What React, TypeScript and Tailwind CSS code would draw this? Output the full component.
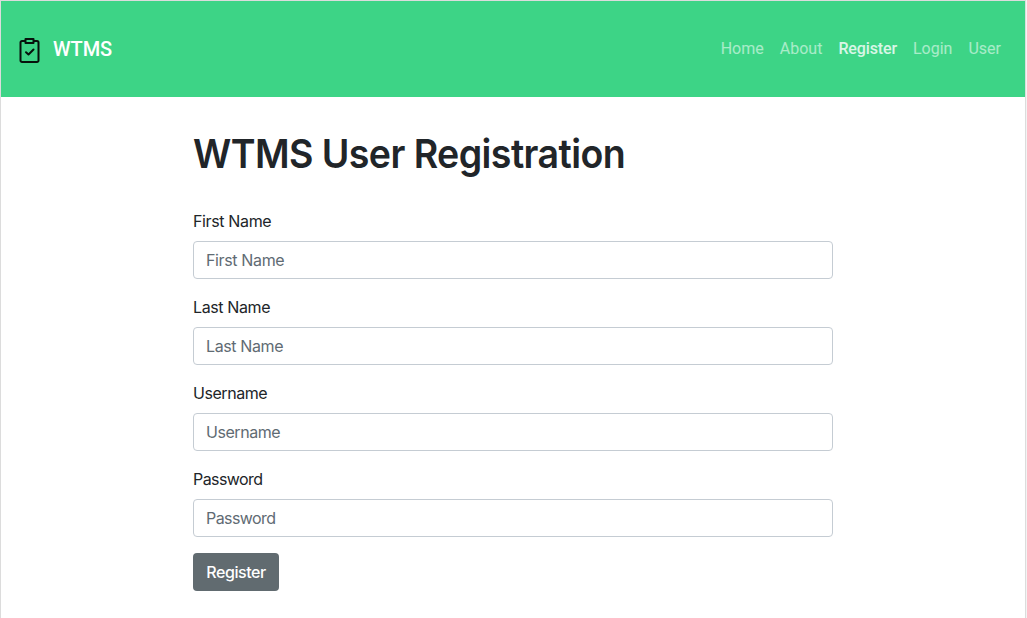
import React from "react";

const fields = [
  { label: "First Name", tracking: "tracking-[-0.36px]" },
  { label: "Last Name", tracking: "tracking-[-0.38px]" },
  { label: "Username", tracking: "tracking-[-0.45px]" },
  { label: "Password", tracking: "tracking-[-0.58px]" },
];

function ClipboardIcon() {
  return (
    <svg className="mt-1" width="24" height="28" viewBox="0 0 24 28" fill="none" stroke="#07120c" strokeWidth="2" strokeLinejoin="round" strokeLinecap="round">
      <path d="M8 4H5A1.500 1.500 0 0 0 3.500 5.500V23.500A1.500 1.500 0 0 0 5 25H20A1.500 1.500 0 0 0 21.500 23.500V5.500A1.500 1.500 0 0 0 20 4H17" />
      <path d="M8.500 2H16.500V6H8.500Z" />
      <path d="M9 15.200L11.500 17.500L16.500 12.500" />
    </svg>
  );
}

export default function App() {
  return (
    <div className="flex h-[618px] w-[1027px] overflow-hidden bg-[#f3f3f3]">
      <div className="w-[1026px] border-t border-r border-l border-[#dcdcdc] bg-white font-['Inter',sans-serif] text-[#212529]">
        <nav className="flex h-24 items-center justify-between bg-[#3dd486] pr-6 pl-4 font-['Roboto',sans-serif]">
          <a className="flex items-center gap-3 text-xl font-medium text-white">
            <ClipboardIcon />
            <span className="tracking-[-0.15px]">WTMS</span>
          </a>
          <div className="flex gap-4 text-base font-normal text-white/55">
            <a>Home</a>
            <a>About</a>
            <a className="font-medium tracking-[-0.12px] text-white/80">Register</a>
            <a>Login</a>
            <a>User</a>
          </div>
        </nav>
        <main className="mx-auto w-[640px] pt-[33px]">
          <h1 className="origin-left scale-x-[0.938] text-[40px] leading-12 font-semibold tracking-[-0.6px] whitespace-nowrap">WTMS User Registration</h1>
          <form className="pt-[31px]">
            {fields.map((f) => (
              <div key={f.label} className="mb-4">
                <label className={`mb-2 block text-base leading-6 ${f.tracking}`}>{f.label}</label>
                <input
                  placeholder={f.label}
                  className={`block h-[38px] w-full rounded border border-[#c5ccd3] px-3 placeholder:text-[#5f6b73] ${f.tracking}`}
                />
              </div>
            ))}
            <button className="h-[38px] w-[86px] rounded bg-[#616b70] font-medium tracking-[-0.45px] text-white">Register</button>
          </form>
        </main>
      </div>
    </div>
  );
}
